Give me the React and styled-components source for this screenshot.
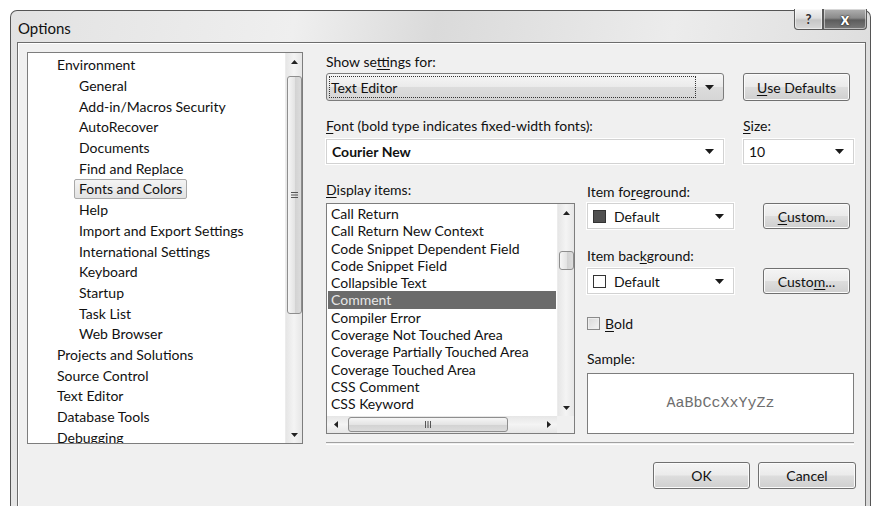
import styled, { createGlobalStyle } from 'styled-components';

const GlobalStyle = createGlobalStyle`
  html, body {
    margin: 0;
    background: #fff;
    overflow: hidden;
  }
  body {
    font-family: Lato, "Open Sans", sans-serif;
    font-size: 14px;
    color: #111;
  }
`;

const Window = styled.div`
  margin: 10px 0 0 10px;
  width: 861px;
  height: 520px;
  box-sizing: border-box;
  border: 1px solid #555;
  border-bottom: none;
  border-radius: 7px 7px 0 0;
  padding: 0 4px 0 6px;
  display: flex;
  flex-direction: column;
  background: linear-gradient(100deg, #e2e2e2 0%, #efefef 30%, #dadada 45%, #ececec 70%, #d8d8d8 100%);
`;

const TitleBar = styled.div`
  height: 31px;
  display: flex;
  align-items: flex-start;
  justify-content: space-between;
`;

const Title = styled.div`
  font-size: 15px;
  line-height: 15px;
  padding: 10px 0 0 1px;
  color: #111;
`;

const CaptionButtons = styled.div`
  display: flex;
  margin-top: -2px;
  margin-right: -1px;
`;

const CaptionButton = styled.div`
  width: ${(p) => p.$w}px;
  height: 21px;
  box-sizing: border-box;
  border: 1px solid #5a5a5a;
  border-top: none;
  display: flex;
  align-items: center;
  justify-content: center;
  font-weight: 900;
  font-size: ${(p) => (p.$close ? 16 : 13)}px;
  line-height: 1;
  color: ${(p) => (p.$close ? '#fff' : '#333')};
  text-shadow: ${(p) => (p.$close ? '0 0 2px #222, 0 0 1px #000' : '0 0 1px #fff')};
  border-radius: ${(p) => (p.$close ? '0 0 4px 0' : '0 0 0 4px')};
  background: ${(p) =>
    p.$close
      ? 'linear-gradient(#b0b0b0, #8a8a8a 45%, #5c5c5c 55%, #7a7a7a)'
      : 'linear-gradient(#f4f4f4, #dedede 45%, #c6c6c6 55%, #d8d8d8)'};
  box-shadow: inset 0 0 0 1px rgba(255, 255, 255, 0.5);
`;

const Client = styled.div`
  flex: 1;
  border: 1px solid #6c6c6c;
  border-bottom: none;
  background: #f0f0f0;
  box-shadow: inset 1px 1px 0 #fff;
  display: grid;
  grid-template-columns: 276px 530px;
  column-gap: 23px;
  align-items: start;
  padding: 9px 0 0 9px;
`;

/* ---------- left tree ---------- */

const TreePanel = styled.div`
  height: 392px;
  box-sizing: border-box;
  border: 1px solid #7d7d7d;
  background: #fff;
  display: grid;
  grid-template-columns: 1fr 17px;
  overflow: hidden;
`;

const TreeItems = styled.div`
  padding-top: 2px;
  overflow: hidden;
`;

const TreeRow = styled.div`
  height: 20.7px;
  display: flex;
  align-items: center;
  padding-left: ${(p) => (p.$child ? 50 : 28)}px;
`;

const TreeLabel = styled.span`
  padding: 0 4px;
  margin-left: -4px;
  line-height: 18px;
  border: 1px solid ${(p) => (p.$selected ? '#a9a9a9' : 'transparent')};
  border-radius: 2px;
  background: ${(p) => (p.$selected ? 'linear-gradient(#f4f4f4, #e2e2e2)' : 'none')};
`;

/* ---------- scrollbars ---------- */

const VScroll = styled.div`
  display: flex;
  flex-direction: column;
  background: linear-gradient(90deg, #e6e6e6, #f4f4f4 50%, #e6e6e6);
  border-left: 1px solid #ececec;
`;

const HScroll = styled.div`
  display: flex;
  background: linear-gradient(#e6e6e6, #f4f4f4 50%, #e6e6e6);
`;

const Arrow = styled.div`
  flex: 0 0 17px;
  height: 17px;
  display: flex;
  align-items: center;
  justify-content: center;
`;

const Track = styled.div`
  flex: 1;
  display: flex;
  flex-direction: ${(p) => (p.$horizontal ? 'row' : 'column')};
  padding: ${(p) => p.$pad};
`;

const Thumb = styled.div`
  box-sizing: border-box;
  width: ${(p) => (p.$horizontal ? `${p.$len}px` : '15px')};
  height: ${(p) => (p.$horizontal ? '15px' : `${p.$len}px`)};
  margin: ${(p) => (p.$horizontal ? '1px 0' : '0 1px')};
  border: 1px solid #8e8e8e;
  border-radius: 3px;
  background: ${(p) =>
    p.$horizontal
      ? 'linear-gradient(#f6f6f6, #e4e4e4 50%, #d2d2d2 51%, #dcdcdc)'
      : 'linear-gradient(90deg, #f6f6f6, #e4e4e4 50%, #d2d2d2 51%, #dcdcdc)'};
  display: flex;
  align-items: center;
  justify-content: center;
`;

const Corner = styled.div`
  background: #f0f0f0;
`;

const Tri = ({ dir }) => {
  const pts = {
    up: '0,4 3.5,0 7,4',
    down: '0,0 3.5,4 7,0',
    left: '4,0 0,3.5 4,7',
    right: '0,0 4,3.5 0,7',
  }[dir];
  const horiz = dir === 'left' || dir === 'right';
  return (
    <svg width={horiz ? 4 : 7} height={horiz ? 7 : 4} viewBox={horiz ? '0 0 4 7' : '0 0 7 4'}>
      <polygon points={pts} fill="#222" />
    </svg>
  );
};

const GripV = () => (
  <svg width="7" height="6" viewBox="0 0 7 6">
    <rect x="0" y="0" width="7" height="1" fill="#555" />
    <rect x="0" y="2.5" width="7" height="1" fill="#555" />
    <rect x="0" y="5" width="7" height="1" fill="#555" />
  </svg>
);

const GripH = () => (
  <svg width="6" height="7" viewBox="0 0 6 7">
    <rect x="0" y="0" width="1" height="7" fill="#555" />
    <rect x="2.5" y="0" width="1" height="7" fill="#555" />
    <rect x="5" y="0" width="1" height="7" fill="#555" />
  </svg>
);

/* ---------- right side ---------- */

const Settings = styled.div`
  display: flex;
  flex-direction: column;
`;

const Label = styled.div`
  line-height: 18px;
  height: 18px;
  margin-top: ${(p) => p.$mt || 0}px;
  white-space: nowrap;
`;

const Key = styled.span`
  text-decoration: underline;
  text-underline-offset: 2px;
`;

const Row = styled.div`
  display: grid;
  grid-template-columns: ${(p) => p.$cols};
  column-gap: ${(p) => p.$gap || 19}px;
  margin-top: ${(p) => p.$mt || 0}px;
  align-items: start;
`;

const Combo = styled.div`
  width: ${(p) => (p.$w ? `${p.$w}px` : 'auto')};
  height: ${(p) => p.$h}px;
  box-sizing: border-box;
  border: 1px solid #d2d2d2;
  outline: 1px solid #fff;
  background: #fff;
  display: flex;
  align-items: center;
  padding: 0 9px 0 ${(p) => p.$pl || 5}px;
  font-weight: ${(p) => (p.$bold ? 'bold' : 'normal')};
  gap: 8px;
`;

const ComboText = styled.span`
  flex: 1;
  white-space: nowrap;
`;

const Swatch = styled.span`
  width: 13px;
  height: 13px;
  box-sizing: border-box;
  border: 1px solid #333;
  background: ${(p) => p.$fill};
`;

const DropCombo = styled.div`
  height: 28px;
  box-sizing: border-box;
  border: 1px solid #7c7c7c;
  border-radius: 3px;
  background: linear-gradient(#f6f6f6, #ebebeb 48%, #dcdcdc 52%, #d6d6d6);
  display: flex;
  align-items: center;
  padding: 2px 9px 2px 2px;
  gap: 9px;
`;

const FocusBox = styled.div`
  flex: 1;
  align-self: stretch;
  border: 1px dotted #333;
  display: flex;
  align-items: center;
  padding-left: 1px;
`;

const Button = styled.div`
  width: ${(p) => p.$w}px;
  height: ${(p) => p.$h || 27}px;
  box-sizing: border-box;
  border: 1px solid #707070;
  border-radius: 3px;
  background: linear-gradient(#f4f4f4, #ebebeb 48%, #dddddd 52%, #cfcfcf);
  box-shadow: inset 0 0 0 1px #fbfbfb;
  display: flex;
  align-items: center;
  justify-content: center;
  white-space: nowrap;
`;

const Lower = styled.div`
  display: grid;
  grid-template-columns: 249px 267px;
  column-gap: 12px;
  margin-top: 17px;
`;

const Column = styled.div`
  display: flex;
  flex-direction: column;
`;

const ItemsBox = styled.div`
  margin-top: 4px;
  height: 231px;
  box-sizing: border-box;
  border: 1px solid #7d7d7d;
  background: #fff;
  display: grid;
  grid-template-columns: 1fr 17px;
  grid-template-rows: 1fr 17px;
  overflow: hidden;
`;

const Items = styled.div`
  padding: 1px 1px 0 1px;
  overflow: hidden;
`;

const Item = styled.div`
  height: 17.3px;
  line-height: 17.3px;
  padding-left: 3px;
  white-space: nowrap;
  background: ${(p) => (p.$selected ? '#6b6b6b' : 'transparent')};
  color: ${(p) => (p.$selected ? '#e6e6e6' : 'inherit')};
`;

const PickerRow = styled.div`
  display: flex;
  justify-content: space-between;
  padding-right: 4px;
  margin-top: ${(p) => p.$mt || 0}px;
`;

const CheckRow = styled.label`
  display: flex;
  align-items: center;
  gap: 5px;
  height: 18px;
  margin-top: 20px;
`;

const CheckBox = styled.span`
  width: 13px;
  height: 13px;
  box-sizing: border-box;
  border: 1px solid #8a8a8a;
  background: linear-gradient(135deg, #d8d8d8, #f4f4f4);
  box-shadow: inset 0 0 0 1px #eee;
`;

const SampleBox = styled.div`
  margin-top: 5px;
  height: 61px;
  box-sizing: border-box;
  border: 1px solid #7d7d7d;
  background: #fff;
  display: flex;
  align-items: center;
  justify-content: center;
  font-family: "Liberation Mono", "Courier New", monospace;
  font-size: 15px;
  color: #6e6e6e;
`;

const Separator = styled.div`
  margin-top: 8px;
  height: 1px;
  border-top: 1px solid #a0a0a0;
  border-bottom: 1px solid #fff;
  width: 528px;
`;

const Footer = styled.div`
  display: flex;
  justify-content: flex-end;
  gap: 8px;
  margin-top: 17px;
`;

const pages = [
  ['Environment', false],
  ['General', true],
  ['Add-in/Macros Security', true],
  ['AutoRecover', true],
  ['Documents', true],
  ['Find and Replace', true],
  ['Fonts and Colors', true, true],
  ['Help', true],
  ['Import and Export Settings', true],
  ['International Settings', true],
  ['Keyboard', true],
  ['Startup', true],
  ['Task List', true],
  ['Web Browser', true],
  ['Projects and Solutions', false],
  ['Source Control', false],
  ['Text Editor', false],
  ['Database Tools', false],
  ['Debugging', false],
];

const displayItems = [
  'Call Return',
  'Call Return New Context',
  'Code Snippet Dependent Field',
  'Code Snippet Field',
  'Collapsible Text',
  'Comment',
  'Compiler Error',
  'Coverage Not Touched Area',
  'Coverage Partially Touched Area',
  'Coverage Touched Area',
  'CSS Comment',
  'CSS Keyword',
];

const Caret = () => (
  <svg width="9" height="5" viewBox="0 0 9 5">
    <polygon points="0,0 9,0 4.5,5" fill="#1a1a1a" />
  </svg>
);

export default function App() {
  return (
    <>
      <GlobalStyle />
      <Window>
        <TitleBar>
          <Title>Options</Title>
          <CaptionButtons>
            <CaptionButton $w={29}>?</CaptionButton>
            <CaptionButton $w={44} $close>x</CaptionButton>
          </CaptionButtons>
        </TitleBar>

        <Client>
          <TreePanel>
            <TreeItems>
              {pages.map(([name, child, selected]) => (
                <TreeRow key={name} $child={child}>
                  <TreeLabel $selected={selected}>{name}</TreeLabel>
                </TreeRow>
              ))}
            </TreeItems>
            <VScroll>
              <Arrow><Tri dir="up" /></Arrow>
              <Track $pad="6px 0 0 0">
                <Thumb $len={238}><GripV /></Thumb>
              </Track>
              <Arrow><Tri dir="down" /></Arrow>
            </VScroll>
          </TreePanel>

          <Settings>
            <Label $mt={1}>Show se<Key>t</Key>tings for:</Label>
            <Row $cols="398px 107px" $mt={2}>
              <DropCombo>
                <FocusBox>Text Editor</FocusBox>
                <Caret />
              </DropCombo>
              <Button $w={107} $h={28}><Key>U</Key>se Defaults</Button>
            </Row>

            <Row $cols="398px 111px" $mt={16}>
              <Label><Key>F</Key>ont (bold type indicates fixed-width fonts):</Label>
              <Label><Key>S</Key>ize:</Label>
            </Row>
            <Row $cols="398px 111px" $mt={4}>
              <Combo $h={25} $bold>
                <ComboText>Courier New</ComboText>
                <Caret />
              </Combo>
              <Combo $h={25}>
                <ComboText>10</ComboText>
                <Caret />
              </Combo>
            </Row>

            <Lower>
              <Column>
                <Label><Key>D</Key>isplay items:</Label>
                <ItemsBox>
                  <Items>
                    {displayItems.map((item) => (
                      <Item key={item} $selected={item === 'Comment'}>{item}</Item>
                    ))}
                  </Items>
                  <VScroll>
                    <Arrow><Tri dir="up" /></Arrow>
                    <Track $pad="30px 0 0 0">
                      <Thumb $len={19} />
                    </Track>
                    <Arrow><Tri dir="down" /></Arrow>
                  </VScroll>
                  <HScroll>
                    <Arrow><Tri dir="left" /></Arrow>
                    <Track $horizontal $pad="0 0 0 4px">
                      <Thumb $horizontal $len={160}><GripH /></Thumb>
                    </Track>
                    <Arrow><Tri dir="right" /></Arrow>
                  </HScroll>
                  <Corner />
                </ItemsBox>
              </Column>

              <Column>
                <Label $mt={2}>Item fo<Key>r</Key>eground:</Label>
                <PickerRow $mt={2}>
                  <Combo $h={26} $w={147}>
                    <Swatch $fill="#505050" />
                    <ComboText>Default</ComboText>
                    <Caret />
                  </Combo>
                  <Button $w={87} $h={26}><Key>C</Key>ustom...</Button>
                </PickerRow>

                <Label $mt={18}>Item bac<Key>k</Key>ground:</Label>
                <PickerRow $mt={3}>
                  <Combo $h={26} $w={147}>
                    <Swatch $fill="#fff" />
                    <ComboText>Default</ComboText>
                    <Caret />
                  </Combo>
                  <Button $w={87} $h={26}>Custo<Key>m</Key>...</Button>
                </PickerRow>

                <CheckRow>
                  <CheckBox />
                  <span><Key>B</Key>old</span>
                </CheckRow>

                <Label $mt={18}>Sample:</Label>
                <SampleBox>AaBbCcXxYyZz</SampleBox>
              </Column>
            </Lower>

            <Separator />
            <Footer>
              <Button $w={97}>OK</Button>
              <Button $w={98}>Cancel</Button>
            </Footer>
          </Settings>
        </Client>
      </Window>
    </>
  );
}
